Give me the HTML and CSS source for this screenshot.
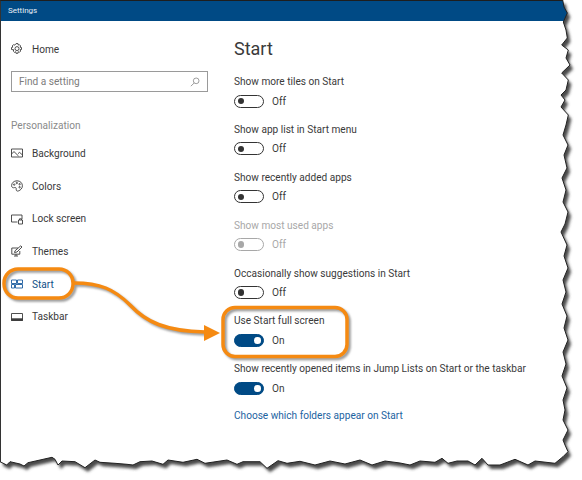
FILE: index.html
```html
<!DOCTYPE html>
<html lang="en">
<head>
    <meta charset="UTF-8">
    <title>Settings</title>
    <link rel="stylesheet" href="styles.css">
</head>
<body>
    <div class="window">
        <header class="titlebar">Settings</header>
        <div class="panes">
            <nav class="sidebar">
                <a class="nav-item home">
                    <svg class="icon" viewBox="0 0 12 12"><path d="M5 .6h2l.3 1.5 1-.5 1.4 1.4-.7 1.1 1.5.4v2l-1.5.3.7 1.2-1.4 1.4-1.1-.7-.3 1.6H5l-.3-1.6-1.1.7-1.4-1.4.7-1.2L.5 6.5v-2l1.4-.4-.7-1.1 1.4-1.4 1.1.6z"/><circle cx="6" cy="5.6" r="2"/></svg>
                    Home
                </a>
                <div class="search">
                    <span>Find a setting</span>
                    <svg class="search-icon" viewBox="0 0 12 12"><circle cx="7.4" cy="4.6" r="3.4"/><path d="M5 7.2 1 11"/></svg>
                </div>
                <div class="group-title">Personalization</div>
                <a class="nav-item">
                    <svg class="icon" viewBox="0 0 12 12"><path d="M.5 2h11v8H.5z"/><path d="M.5 7 3 4.6 7.5 9M7 6.6l1.6-1.2L11.5 8"/></svg>
                    Background
                </a>
                <a class="nav-item">
                    <svg class="icon" viewBox="0 0 12 12"><path d="M6 .8C2.8.8.6 3 .6 5.6c0 2.2 1.6 2.4 2.8 2 1.4-.4 2 .4 1.8 1.6-.2 1.4.8 2.2 2 1.8 2.4-.6 4.2-2.8 4.2-5.2C11.4 3 9.2.8 6 .8z"/><circle cx="3.2" cy="4.6" r=".7"/><circle cx="5.8" cy="3" r=".7"/><circle cx="8.6" cy="4.2" r=".7"/><circle cx="8.6" cy="7.2" r=".7"/></svg>
                    Colors
                </a>
                <a class="nav-item">
                    <svg class="icon" viewBox="0 0 12 12"><path d="M6.5 9H.5V2h10.500v4"/><path d="M7.5 7h4v4h-4zM8.5 7V5.800h2V7"/></svg>
                    Lock screen
                </a>
                <a class="nav-item">
                    <svg class="icon" viewBox="0 0 12 12"><path d="M7 3H.8v6.200h8V6"/><path d="M3 11h4M5 9.200V11"/><path d="M3.5 7.5 4 5.800 9.800.8l1.200 1.200L6 7z"/></svg>
                    Themes
                </a>
                <a class="nav-item active">
                    <svg class="icon" viewBox="0 0 12 12"><path d="M.5 2h5v3.500h-5zM6.500 2h5v3.500h-5zM.5 6.500h3V10h-3zM4.500 6.500h7V10h-7z"/></svg>
                    Start
                </a>
                <a class="nav-item">
                    <svg class="icon" viewBox="0 0 12 12"><path d="M.5 2.500h11v7H.5z"/><path class="solid" d="M.5 7.800h11v1.700H.5z"/></svg>
                    Taskbar
                </a>
            </nav>
            <main class="content">
                <h1>Start</h1>
                <div class="setting">
                    <div class="label">Show more tiles on Start</div>
                    <div class="control"><span class="toggle"></span>Off</div>
                </div>
                <div class="setting">
                    <div class="label">Show app list in Start menu</div>
                    <div class="control"><span class="toggle"></span>Off</div>
                </div>
                <div class="setting">
                    <div class="label">Show recently added apps</div>
                    <div class="control"><span class="toggle"></span>Off</div>
                </div>
                <div class="setting disabled">
                    <div class="label">Show most used apps</div>
                    <div class="control"><span class="toggle"></span>Off</div>
                </div>
                <div class="setting">
                    <div class="label">Occasionally show suggestions in Start</div>
                    <div class="control"><span class="toggle"></span>Off</div>
                </div>
                <div class="setting">
                    <div class="label">Use Start full screen</div>
                    <div class="control"><span class="toggle on"></span>On</div>
                </div>
                <div class="setting">
                    <div class="label">Show recently opened items in Jump Lists on Start or the taskbar</div>
                    <div class="control"><span class="toggle on"></span>On</div>
                </div>
                <a class="link">Choose which folders appear on Start</a>
            </main>
        </div>
    </div>

    <!-- torn paper edge and the orange callouts sit on top of the window -->
    <svg class="overlay" viewBox="0 0 582 480">
        <defs>
            <path id="tear" d="M0 0 L562.7 0 564 7 567.3 13 563.3 22 566 30 567.3 38 561.7 45 568.3 50 566 58 570 65 561.7 73 568.3 80 566 90 561 95 565 100 561 107 568.3 115 566 125 563 135 568 145 564 155 567 168 562 178 566 190 563 202 568 212 565 224 561 232 567 245 564 256 568 268 563 280 566 292 562 304 567 316 564 328 568 340 563 352 566 364 562 376 567 388 563 400 565 410 563 420 568 430 563 440 565 445 568 451.7 563 456.7 555 463.3 535 461 528 465 515 459.3 500 465 488 465 482 458.3 475 465 468 461 457 461 448 463.3 442 458.3 435 462.3 420 461 410 465 400 463 385 461 372 465 360 460 345 464 330 461 315 465 300 461.3 287 463.3 278 460.7 267 468.3 260 461.7 243 461.7 237 464.3 227 460 205 463.3 197 459.3 183 462.3 168 460 163 464.3 152 461 140 461.7 133 465 127 464.3 115 463.3 100 462.3 95 460 85 467.7 75 461.7 62 461 58 465 55 459.3 52 457.3 40 460 28 462.7 24 466 20 464 10 461.7 6.7 465 0 461.7Z"/>
            <mask id="outside" maskUnits="userSpaceOnUse" x="0" y="0" width="582" height="480">
                <rect width="582" height="480" fill="#fff"/>
                <use href="#tear" fill="#000"/>
            </mask>
            <filter id="blur" x="-10%" y="-10%" width="120%" height="120%"><feGaussianBlur stdDeviation="1.5"/></filter>
            <filter id="soft" x="-10%" y="-10%" width="120%" height="120%"><feGaussianBlur stdDeviation="1.2"/></filter>
        </defs>
        <g mask="url(#outside)">
            <rect class="paper" width="582" height="480"/>
            <use class="tear-shadow" href="#tear" filter="url(#blur)" transform="translate(3 4)"/>
        </g>
        <use class="tear-line" href="#tear"/>

        <g class="callout-shadow" filter="url(#soft)" transform="translate(2 2)">
            <rect x="4" y="269" width="69" height="29" rx="14"/>
            <rect x="223" y="307.5" width="124" height="49" rx="12"/>
            <path d="M74 283C100 283 114 289 130 305C146 322 165 331 205 332"/>
        </g>
        <g class="callout">
            <rect x="4" y="269" width="69" height="29" rx="14"/>
            <rect x="223" y="307.5" width="124" height="49" rx="12"/>
            <path d="M74 283C100 283 114 289 130 305C146 322 165 331 205 332"/>
        </g>
        <path class="arrow-head" d="M204 325 220 333 204 341z"/>
    </svg>
</body>
</html>
```

FILE: styles.css
```css
html, body {
    margin: 0;
    padding: 0;
    width: 582px;
    height: 480px;
    overflow: hidden;
    background: #fff;
}
body {
    font-family: 'Roboto', 'Open Sans', sans-serif;
    font-size: 10.1px;
    color: #3a3a3a;
    position: relative;
}
.window {
    height: 480px;
    box-sizing: border-box;
    border-left: 1px solid #444;
    border-top: 1px solid #1a1a1a;
}
.titlebar {
    background: #004a85;
    color: #e6eef5;
    font-size: 8px;
    height: 20px;
    line-height: 20px;
    padding-left: 7px;
}
.panes {
    display: flex;
}
.sidebar {
    width: 233px;
    box-sizing: border-box;
    padding: 18px 0 0 10px;
    flex: none;
}
.nav-item {
    display: flex;
    align-items: center;
    gap: 9px;
    height: 32.7px;
    color: #3a3a3a;
}
.icon {
    width: 12px;
    height: 12px;
    flex: none;
    fill: none;
    stroke: #3c3c3c;
    stroke-width: 0.9;
}
.icon .solid {
    fill: #3c3c3c;
}
.nav-item.home {
    height: 20px;
}
.search {
    width: 197px;
    height: 21px;
    box-sizing: border-box;
    border: 1px solid #9a9a9a;
    margin-top: 12px;
    display: flex;
    align-items: center;
    justify-content: space-between;
    padding: 0 7px;
    color: #7c7c7c;
}
.search-icon {
    width: 10px;
    height: 10px;
    fill: none;
    stroke: #8a8a8a;
    stroke-width: 1;
}
.group-title {
    color: #8a8a8a;
    margin-top: 26px;
    margin-bottom: 3px;
    height: 16px;
    line-height: 16px;
}
.nav-item.active {
    color: #0f4f86;
}
.nav-item.active .icon {
    stroke: #185a9d;
}
.content {
    flex: 1;
}
h1 {
    font-size: 18px;
    font-weight: 400;
    line-height: 26px;
    margin: 15px 0 13px;
    color: #3a3a3a;
}
.setting {
    height: 47.9px;
}
.label {
    line-height: 14px;
    height: 18px;
}
.control {
    display: flex;
    align-items: center;
    gap: 8px;
    height: 16px;
}
.toggle {
    width: 30px;
    height: 13px;
    box-sizing: border-box;
    border: 1.5px solid #333;
    border-radius: 7px;
    display: flex;
    align-items: center;
    padding: 0 2.5px;
}
.toggle::after {
    content: "";
    width: 6.5px;
    height: 6.5px;
    border-radius: 50%;
    background: #333;
}
.toggle.on {
    background: #004a85;
    border-color: #004a85;
    justify-content: flex-end;
}
.toggle.on::after {
    background: #fff;
}
.disabled {
    color: #a8a8a8;
}
.disabled .toggle {
    border-color: #a8a8a8;
}
.disabled .toggle::after {
    background: #a8a8a8;
}
.link {
    display: block;
    margin-top: -2px;
    color: #1c639f;
    line-height: 16px;
}
.overlay {
    position: absolute;
    left: 0;
    top: 0;
    width: 582px;
    height: 480px;
    pointer-events: none;
}
.paper {
    fill: #fff;
}
.tear-shadow {
    fill: #4a4a4a;
}
.tear-line {
    fill: none;
    stroke: #222;
    stroke-width: 1;
}
.callout, .callout-shadow {
    fill: none;
    stroke-width: 3.5;
}
.callout {
    stroke: #f58a12;
}
.callout-shadow {
    stroke: #9a9a9a;
}
.arrow-head {
    fill: #f58a12;
}
```
